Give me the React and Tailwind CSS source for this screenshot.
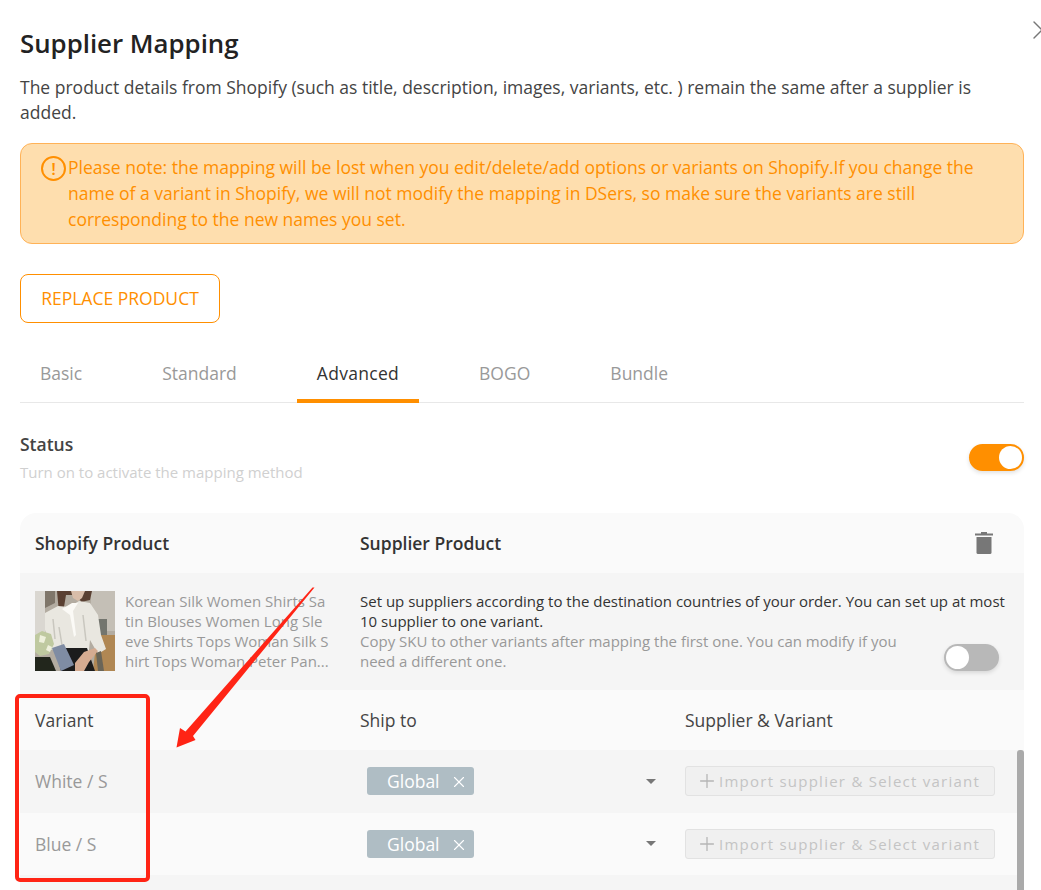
import { Plus, X } from 'lucide-react';

const tabs = ['Basic', 'Standard', 'Advanced', 'BOGO', 'Bundle'];

const Toggle = ({ on }) => (
  <div className={`w-[55px] h-[27px] rounded-full p-[2px] flex shadow-[0_2px_4px_rgba(0,0,0,0.12)] ${on ? 'bg-[#ff8f00] justify-end' : 'bg-[#b8b8b8] justify-start'}`}>
    <div className="w-[23px] h-[23px] rounded-full bg-white" />
  </div>
);

// small stand-in for the product photo
const ProductPhoto = () => (
  <svg width="80" height="80" viewBox="0 0 80 80" className="shrink-0">
    <defs>
      <filter id="soft"><feGaussianBlur stdDeviation="0.6" /></filter>
      <clipPath id="frame"><rect width="80" height="80" /></clipPath>
    </defs>
    <g clipPath="url(#frame)">
      <g filter="url(#soft)">
        <rect width="80" height="80" fill="#b3aca1" />
        <rect x="56" y="0" width="24" height="40" fill="#c4bfb6" />
        <rect x="0" y="0" width="10" height="46" fill="#dad7d1" />
        <path d="M10 0h10v12l-10 5z" fill="#7f766a" />
        <path d="M60 28h12v16H62z" fill="#73756e" />
        <path d="M62 44h18v36H58z" fill="#b08753" />
        <path d="M22 0h35l-2 9-9 2-3-7-12 0-2 12-5 6z" fill="#5a4133" />
        <path d="M36 0h14l-3 7-4 3-5-3z" fill="#d9bda9" />
        <path d="M10 22l13-7 11 1 10-6 11 2 8 12 3 20 5 14-8 5-8-14-1 10-1 4H24l-2-6-6 2-6-20z" fill="#e9e7e0" />
        <path d="M27 18l10-6 6 0-5 8 3 24-2 2-4-22z" fill="#fbfaf6" />
        <path d="M24 36l3 18M48 24l3 26M18 28l2 20" stroke="#c9c7bf" strokeWidth="1.500" fill="none" />
        <path d="M0 44l7-4 9 3 3 10-5 10-9 2-5-4z" fill="#bfc9a0" />
        <path d="M5 44l6 2-2 6-5-1zM13 54l4 2-2 5-4-2z" fill="#eef0dc" />
        <path d="M0 66h15l6 14H0z" fill="#22251f" />
        <path d="M20 57h32l8 23H26z" fill="#1c1b1e" />
        <path d="M17 57l12-4 10 21-13 6z" fill="#7f8ca3" />
        <path d="M40 72l9-11 11-4 3 3-9 11-5 9h-9z" fill="#d5ab91" />
        <path d="M61 62l5-2 3 20h-6z" fill="#6b6558" />
      </g>
    </g>
  </svg>
);

const VariantRow = ({ name, bg }) => (
  <div className={`flex items-center h-[62.5px] ${bg}`}>
    <div className="w-[325px] pl-[15px] text-[#999]">{name}</div>
    <div className="w-[325px] pl-[22px] pr-[14px] flex items-center justify-between">
      <div className="w-[107px] h-[28px] rounded-[3px] bg-[#afbdc4] text-white flex items-center pl-[20px]">
        <span>Global</span>
        <X size={18} strokeWidth={1.5} className="ml-[10px] mt-[2px]" />
      </div>
      <div className="w-0 h-0 border-x-[5px] border-x-transparent border-t-[5px] border-t-[#777]" />
    </div>
    <div className="ml-[15px] w-[310px] h-[30px] rounded-[3px] border border-[#e2e2e2] bg-[#f0f0f0] flex items-center gap-[1px] pl-[10px] text-[15px] tracking-[1.25px] text-[#c4c4c4]">
      <Plus size={22} strokeWidth={1.4} className="text-[#b5b5b5] shrink-0" />
      <span className="whitespace-nowrap">Import supplier &amp; Select variant</span>
    </div>
  </div>
);

export default function App() {
  return (
    <div className="relative w-[1041px] h-[890px] overflow-hidden bg-white font-['Open_Sans',sans-serif] text-[17.5px] text-[#555]">
      <X size={32} strokeWidth={1} className="absolute left-[1026px] top-[14px] text-[#777]" />

      <div className="pl-[20px] pr-[17px] pt-[26px]">
        <h1 className="text-[25.8px] leading-[34px] font-semibold text-[#222]">Supplier Mapping</h1>
        <p className="mt-[15px] leading-[25px] text-[#444]">
          The product details from Shopify (such as title, description, images, variants, etc. ) remain the same after a supplier is added.
        </p>

        <div className="mt-[18px] h-[101px] rounded-[12px] border border-[#ffb257] bg-[#fedeae] pl-[20px] pr-[16px] pt-[10px] flex text-[#ff8f00] leading-[26px]">
          <div className="shrink-0 w-[25px] h-[25px] mt-[2px] mr-[2px] rounded-full border-2 border-[#ff8f00] flex items-center justify-center text-[17px] font-semibold leading-none">!</div>
          <p>
            Please note: the mapping will be lost when you edit/delete/add options or variants on Shopify.If you change the name of a variant in Shopify, we will not modify the mapping in DSers, so make sure the variants are still corresponding to the new names you set.
          </p>
        </div>

        <button className="mt-[30px] block w-[200px] h-[49px] rounded-[8px] border border-[#ff8f00] text-[#ff8f00] bg-white">
          REPLACE PRODUCT
        </button>

        <div className="mt-[26px] h-[54px] flex gap-10 border-b border-[#e8e8e8]">
          {tabs.map((tab) => (
            <div
              key={tab}
              className={`px-5 h-[54px] flex items-center text-[17.5px] ${tab === 'Advanced' ? 'text-[#333] font-medium tracking-[0.3px] border-b-4 border-[#ff8f00] pb-[2px]' : 'text-[#999] pb-[6px]'}`}
            >
              {tab}
            </div>
          ))}
        </div>

        <div className="mt-[28px] flex items-start justify-between">
          <div>
            <div className="leading-[26px] font-semibold text-[#444]">Status</div>
            <div className="mt-[5px] text-[15px] leading-[20px] text-[#d0d0d0]">Turn on to activate the mapping method</div>
          </div>
          <div className="mt-[13px]"><Toggle on /></div>
        </div>

        <div className="relative mt-[31px] rounded-t-[16px] overflow-hidden">
          <div className="flex items-center h-[60px] bg-[#fafafa] font-semibold text-[#333]">
            <div className="w-[325px] pl-[15px]">Shopify Product</div>
            <div className="flex-1 pl-[15px]">Supplier Product</div>
            <svg width="20" height="24" viewBox="0 0 20 24" className="mr-[30px]" fill="#777">
              <path d="M7 1h6v1.500h6v2H1v-2h6z" />
              <path d="M2.500 6h15v15.500a1.500 1.500 0 0 1-1.500 1.500H4a1.500 1.500 0 0 1-1.500-1.500z" />
            </svg>
          </div>

          <div className="flex h-[117px] bg-[#f5f5f5] pt-[18px]">
            <div className="w-[325px] pl-[15px] flex gap-[10px]">
              <ProductPhoto />
              <p className="w-[205px] text-[15px] leading-[20px] text-[#999] break-all">
                Korean Silk Women Shirts Satin Blouses Women Long Sleeve Shirts Tops Woman Silk Shirt Tops Woman Peter Pan...
              </p>
            </div>
            <div className="relative flex-1 pl-[15px] pr-[16px] text-[15px] leading-[20px] text-[#333]">
              <p>Set up suppliers according to the destination countries of your order. You can set up at most 10 supplier to one variant.</p>
              <p className="w-[560px] text-[#999]">Copy SKU to other variants after mapping the first one. You can modify if you need a different one.</p>
              <div className="absolute left-[599px] top-[53px]"><Toggle /></div>
            </div>
          </div>

          <div className="flex items-center h-[60px] bg-[#fafafa] text-[#444]">
            <div className="w-[325px] pl-[15px]">Variant</div>
            <div className="w-[325px] pl-[15px]">Ship to</div>
            <div className="pl-[15px]">Supplier &amp; Variant</div>
          </div>

          <VariantRow name="White / S" bg="bg-[#f5f5f5]" />
          <VariantRow name="Blue / S" bg="bg-[#fafafa]" />
          <div className="h-[60px] bg-[#f5f5f5]" />

          <div className="absolute right-0 top-[237px] w-[7px] h-[200px] rounded-t-[3px] bg-[#aaaaaa]" />
        </div>
      </div>

      {/* red annotation over the screenshot */}
      <div className="absolute left-[15px] top-[694px] w-[135px] h-[188px] rounded-[5px] border-[4px] border-[#ff2415]" />
      <svg className="absolute left-0 top-0 pointer-events-none" width="1041" height="890">
        <path d="M314.500 587.500 L193 736 L195.500 740 L176.500 747.500 L180 728 L185.500 731.500 L312.500 587.500z" fill="#ff2415" />
      </svg>
    </div>
  );
}
